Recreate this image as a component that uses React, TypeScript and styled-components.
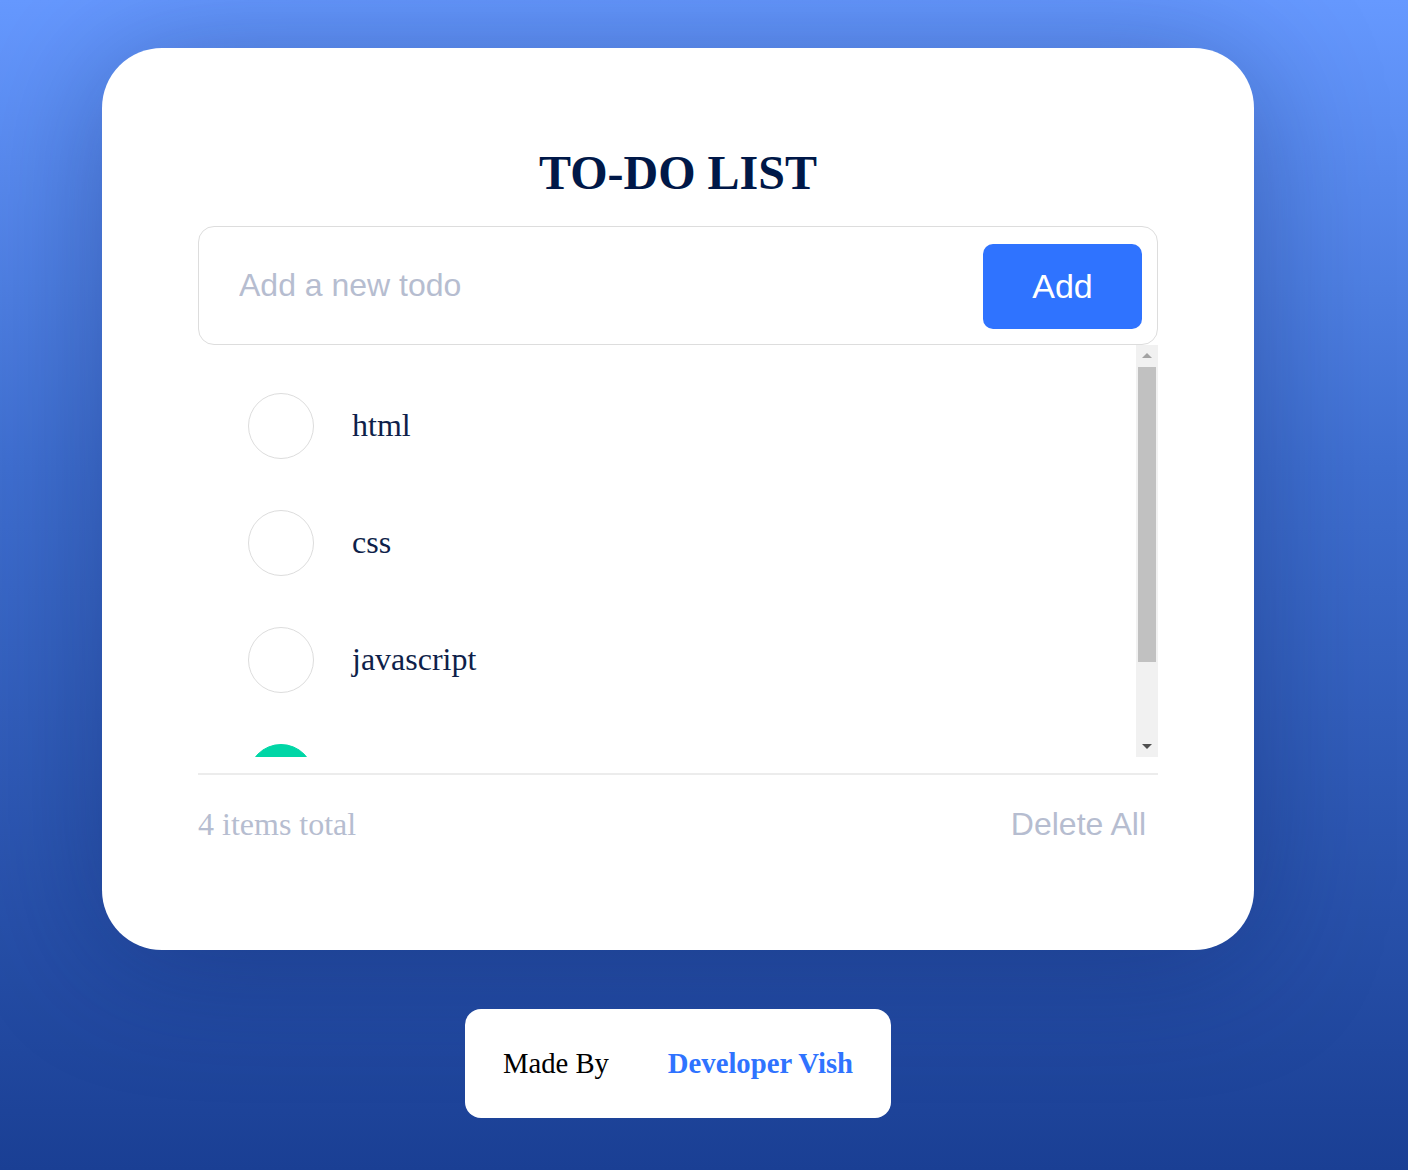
import styled, { createGlobalStyle } from 'styled-components';

const GlobalStyle = createGlobalStyle`
  html, body {
    margin: 0;
    padding: 0;
  }
  body {
    min-height: 1170px;
    background: linear-gradient(180deg, #6699ff 0%, #3f6fd0 40%, #1a3f94 100%);
    font-family: "Liberation Serif", "Times New Roman", serif;
  }
`;

const Page = styled.main`
  width: 1356px;
  min-height: 1170px;
  padding-top: 48px;
  box-sizing: border-box;
  display: flex;
  flex-direction: column;
  align-items: center;
`;

const Card = styled.section`
  width: 1152px;
  height: 902px;
  box-sizing: border-box;
  padding: 97px 96px 0;
  background: #fff;
  border-radius: 60px;
  box-shadow: 0 10px 130px rgba(10, 30, 90, 0.35);
  display: flex;
  flex-direction: column;
`;

const Title = styled.h1`
  margin: 0 0 26px;
  font-family: "Liberation Serif", "Times New Roman", serif;
  font-size: 48px;
  line-height: 55px;
  font-weight: 700;
  text-align: center;
  color: #001848;
`;

const InputRow = styled.form`
  height: 119px;
  box-sizing: border-box;
  border: 1px solid #dddddd;
  border-radius: 16px;
  padding: 0 15px 0 40px;
  display: flex;
  align-items: center;
  gap: 16px;
`;

const TodoInput = styled.input`
  flex: 1;
  border: none;
  outline: none;
  background: transparent;
  font-family: "Liberation Sans", Arial, sans-serif;
  font-size: 32px;
  color: #0f1f4a;
  padding: 0;

  &::placeholder {
    color: #b6bdd0;
  }
`;

const AddButton = styled.button`
  width: 159px;
  height: 85px;
  margin-top: 2px;
  border: none;
  border-radius: 10px;
  background: #2f73ff;
  color: #fff;
  font-family: "Liberation Sans", Arial, sans-serif;
  font-size: 34px;
  cursor: pointer;
`;

const ListArea = styled.div`
  height: 412px;
  display: flex;
`;

const List = styled.ul`
  flex: 1;
  list-style: none;
  margin: 0;
  padding: 22px 0 0;
  overflow: hidden;
`;

const ScrollTrack = styled.div`
  width: 22px;
  background: #f1f1f1;
  display: flex;
  flex-direction: column;
  align-items: center;
`;

const Arrow = styled.div<{ dir: 'up' | 'down' }>`
  height: 21px;
  width: 100%;
  display: flex;
  align-items: center;
  justify-content: center;

  &::before {
    content: '';
    width: 0;
    height: 0;
    border-left: 5px solid transparent;
    border-right: 5px solid transparent;
    ${({ dir }) =>
      dir === 'up'
        ? 'border-bottom: 5px solid #a3a3a3;'
        : 'border-top: 5px solid #505050;'}
  }
`;

const Thumb = styled.div`
  width: 18px;
  height: 295px;
  margin-top: 1px;
  background: #c1c1c1;
`;

const TrackFill = styled.div`
  flex: 1;
`;

const Item = styled.li`
  height: 117px;
  padding-left: 50px;
  display: flex;
  align-items: center;
  gap: 38px;
`;

const Check = styled.span<{ done: boolean }>`
  width: 66px;
  height: 66px;
  box-sizing: border-box;
  border-radius: 50%;
  border: 1px solid ${({ done }) => (done ? '#00d6a6' : '#dddddd')};
  background: ${({ done }) => (done ? '#00d6a6' : '#fff')};
  flex-shrink: 0;
`;

const ItemText = styled.span<{ done: boolean }>`
  font-size: 32px;
  color: ${({ done }) => (done ? '#b6bdd0' : '#0f1f4a')};
  text-decoration: ${({ done }) => (done ? 'line-through' : 'none')};
`;

const Divider = styled.hr`
  margin: 16px 0 0;
  border: none;
  height: 2px;
  background: #ececec;
`;

const Footer = styled.div`
  margin-top: 29px;
  height: 40px;
  display: flex;
  align-items: center;
  justify-content: space-between;
`;

const Count = styled.span`
  font-size: 32px;
  color: #b6bdd0;
`;

const ClearButton = styled.button`
  border: none;
  background: none;
  padding: 0 12px 0 0;
  font-family: "Liberation Sans", Arial, sans-serif;
  font-size: 32px;
  color: #b6bdd0;
  cursor: pointer;
`;

const Credit = styled.div`
  margin-top: 59px;
  width: 426px;
  height: 109px;
  box-sizing: border-box;
  padding: 0 38px;
  background: #fff;
  border-radius: 16px;
  display: flex;
  align-items: center;
  justify-content: space-between;
  font-size: 28.7px;
`;

const MadeBy = styled.span`
  color: #000;
`;

const Author = styled.a`
  color: #2f73ff;
  font-weight: 700;
  text-decoration: none;
`;

const todos = [
  { id: 1, text: 'html', done: false },
  { id: 2, text: 'css', done: false },
  { id: 3, text: 'javascript', done: false },
  { id: 4, text: 'react', done: true },
];

export default function App() {
  return (
    <>
      <GlobalStyle />
      <Page>
        <Card>
          <Title>TO-DO LIST</Title>
          <InputRow onSubmit={(e) => e.preventDefault()}>
            <TodoInput placeholder="Add a new todo" />
            <AddButton type="submit">Add</AddButton>
          </InputRow>
          <ListArea>
            <List>
              {todos.map((todo) => (
                <Item key={todo.id}>
                  <Check done={todo.done} />
                  <ItemText done={todo.done}>{todo.text}</ItemText>
                </Item>
              ))}
            </List>
            <ScrollTrack>
              <Arrow dir="up" />
              <Thumb />
              <TrackFill />
              <Arrow dir="down" />
            </ScrollTrack>
          </ListArea>
          <Divider />
          <Footer>
            <Count>{todos.length} items total</Count>
            <ClearButton>Delete All</ClearButton>
          </Footer>
        </Card>
        <Credit>
          <MadeBy>Made By</MadeBy>
          <Author href="#">Developer Vish</Author>
        </Credit>
      </Page>
    </>
  );
}
